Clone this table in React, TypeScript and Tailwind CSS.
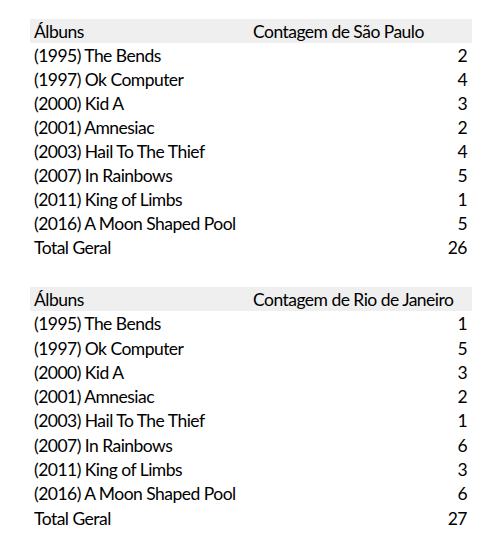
import React from "react";

type Row = { album: string; count: number };

const albums = [
  "(1995) The Bends",
  "(1997) Ok Computer",
  "(2000) Kid A",
  "(2001) Amnesiac",
  "(2003) Hail To The Thief",
  "(2007) In Rainbows",
  "(2011) King of Limbs",
  "(2016) A Moon Shaped Pool",
];

const saoPaulo: Row[] = albums.map((album, i) => ({ album, count: [2, 4, 3, 2, 4, 5, 1, 5][i] }));
const rioDeJaneiro: Row[] = albums.map((album, i) => ({ album, count: [1, 5, 3, 2, 1, 6, 3, 6][i] }));

const PivotTable: React.FC<{ city: string; rows: Row[]; rowClass: string }> = ({ city, rows, rowClass }) => {
  const total = rows.reduce((sum, r) => sum + r.count, 0);

  return (
    <div className="ml-[30px] w-[442px] text-[17.5px] tracking-[-0.03em] text-black">
      <div className={`grid grid-cols-[220px_222px] items-center pb-[2px] bg-[#efefef] ${rowClass}`}>
        <div className="pl-[4px]">Álbuns</div>
        <div className="pl-[3px]">Contagem de {city}</div>
      </div>
      {rows.map((r) => (
        <div key={r.album} className={`grid grid-cols-[220px_222px] items-center pb-[2px] ${rowClass}`}>
          <div className="pl-[4px] whitespace-nowrap">{r.album}</div>
          <div className="pr-[5px] text-right">{r.count}</div>
        </div>
      ))}
      <div className={`grid grid-cols-[220px_222px] items-center pb-[2px] ${rowClass}`}>
        <div className="pl-[4px]">Total Geral</div>
        <div className="pr-[5px] text-right">{total}</div>
      </div>
    </div>
  );
};

export default function App() {
  return (
    <div className="w-[500px] h-[547px] bg-white pt-[19px] font-['Lato','Open_Sans',sans-serif]">
      <PivotTable city="São Paulo" rows={saoPaulo} rowClass="h-[24px]" />
      <div className="h-[28px]" />
      <PivotTable city="Rio de Janeiro" rows={rioDeJaneiro} rowClass="h-[24.3px]" />
    </div>
  );
}
